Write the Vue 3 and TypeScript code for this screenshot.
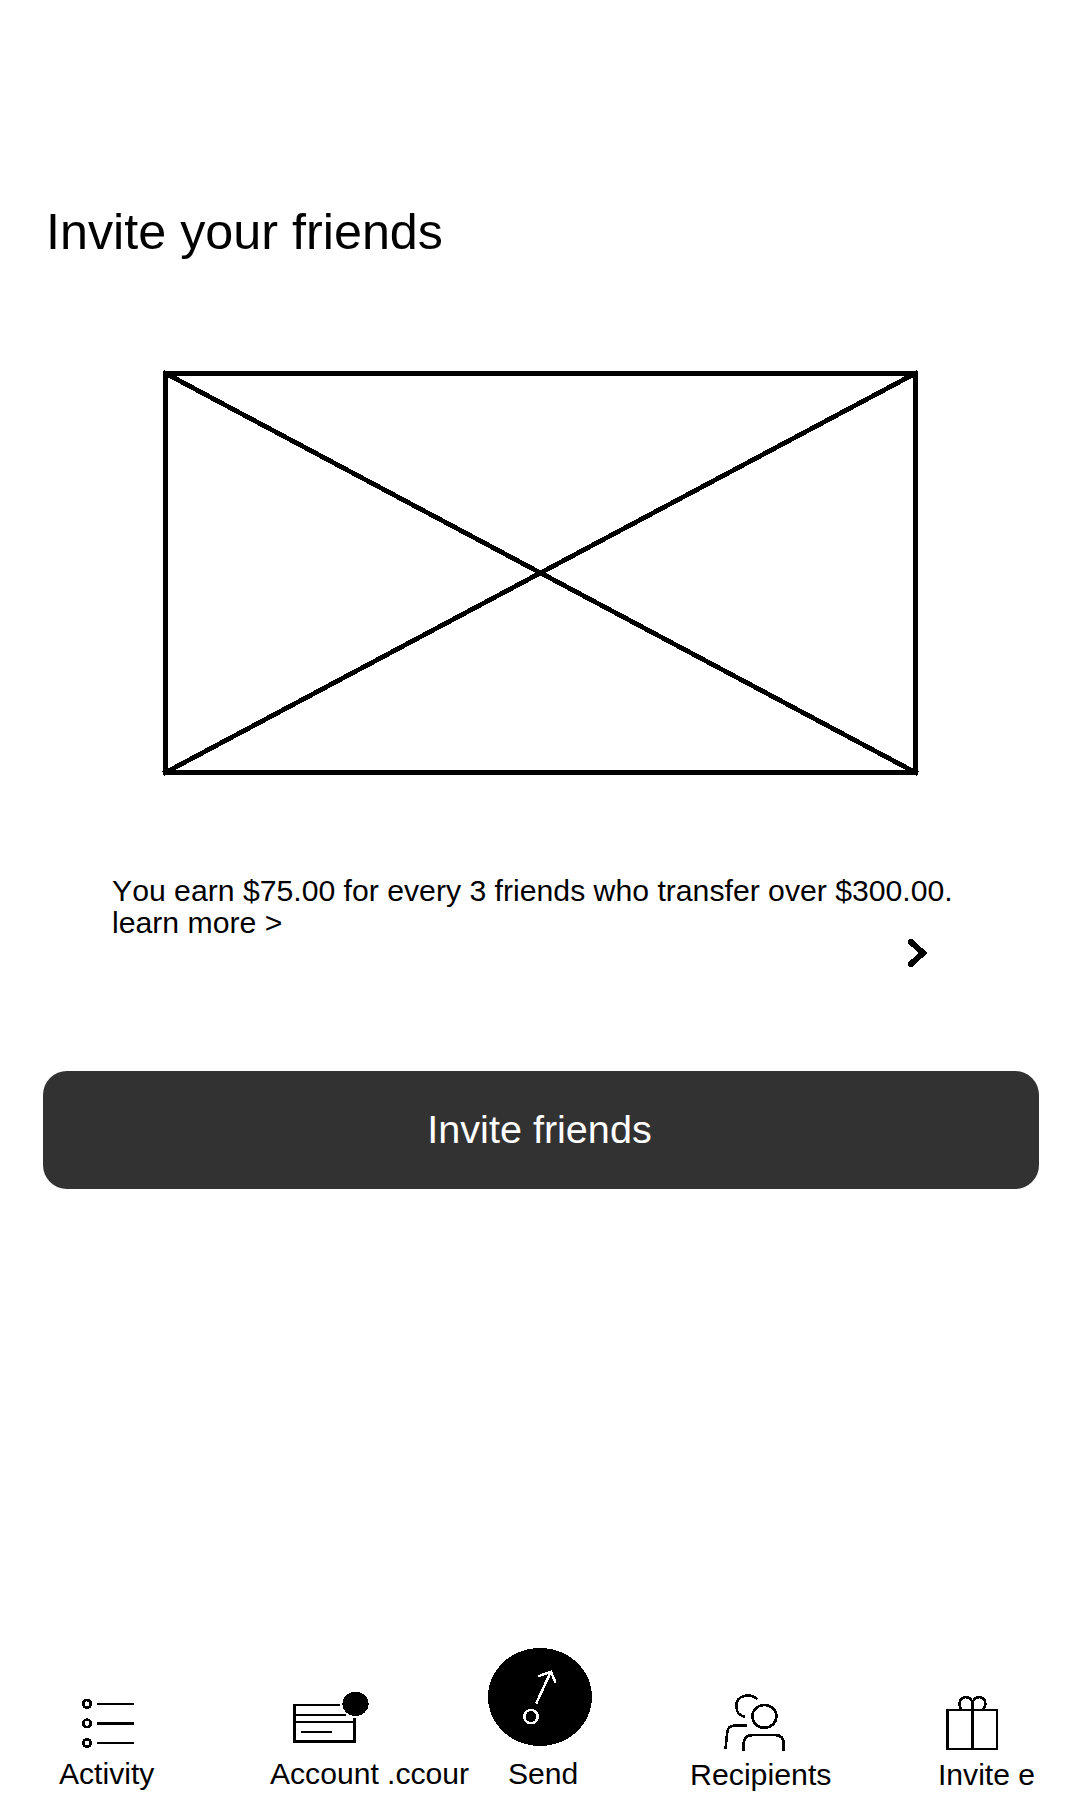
<script setup lang="ts">
const title = 'Invite your friends'
const reward = 'You earn $75.00 for every 3 friends who transfer over $300.00.'
</script>

<template>
  <main class="screen">
    <h1 class="title">{{ title }}</h1>

    <svg class="placeholder" viewBox="160 368 761 410" fill="none" stroke="#000" stroke-width="4.8">
      <rect x="165.5" y="373.3" width="750" height="399.2" />
      <path d="M165.5 373.3 915.5 772.5M915.5 373.3 165.5 772.5" stroke-linecap="square" />
    </svg>

    <section class="info">
      <p class="reward">{{ reward }}<br />learn more &gt;</p>
      <svg class="chevron" viewBox="906 937 23 32" fill="none" stroke="#000" stroke-width="6">
        <path d="M911 942 923 953 911 964" stroke-linecap="round" />
      </svg>
    </section>

    <button class="invite" type="button">Invite friends</button>

    <nav class="nav">
      <a class="item activity">
        <svg viewBox="59 1640 211 120" fill="none" stroke="#000">
          <g stroke-width="2.7">
            <circle cx="87" cy="1703.8" r="3.8" />
            <circle cx="87" cy="1723.4" r="3.8" />
            <circle cx="87" cy="1743" r="3.8" />
          </g>
          <path d="M97.3 1704H134M97.3 1743H134" stroke-width="2" />
          <path d="M97.3 1723.5H134" stroke-width="3" />
        </svg>
        <span>Activity</span>
      </a>
      <a class="item account">
        <svg viewBox="270 1640 238 120" fill="none" stroke="#000">
          <path d="M340 1705H293M295 1715H346M295 1722H355M301 1732H332" stroke-width="2" />
          <path d="M294.5 1704V1741.5H354.5V1718" stroke-width="3" />
          <ellipse cx="355.5" cy="1703.8" rx="13.1" ry="12.1" fill="#000" stroke="none" />
        </svg>
        <span>Account .ccour</span>
      </a>
      <a class="item send">
        <svg viewBox="508 1640 182 120" fill="none" stroke="#fff" stroke-width="2.5">
          <ellipse cx="540" cy="1697" rx="52" ry="49" fill="#000" stroke="none" />
          <circle cx="531" cy="1716.6" r="6.7" />
          <path d="M536.2 1703.5 550.7 1672M538.3 1676.3 551 1671.7 555.5 1682.7" />
        </svg>
        <span>Send</span>
      </a>
      <a class="item recipients">
        <svg viewBox="690 1640 248 120" fill="none" stroke="#000" stroke-width="2.6">
          <ellipse cx="764.4" cy="1716.4" rx="12" ry="11.4" />
          <path d="M743.5 1751V1745Q743.5 1735 753 1735H775Q783.7 1735 783.7 1744V1751" />
          <path d="M757.6 1699.3C750 1692.5 736.3 1695 736.3 1706C736.3 1712 740 1716 745 1716.8" />
          <path d="M725.5 1748.7 727.3 1732Q728 1725.5 735 1725.5H747" />
        </svg>
        <span>Recipients</span>
      </a>
      <a class="item gift">
        <svg viewBox="938 1640 142 120" fill="none" stroke="#000">
          <path d="M946 1710H998M997 1709V1750M946 1749H998" stroke-width="2" />
          <path d="M947.4 1709V1750M972.5 1702V1750" stroke-width="3" />
          <path d="M961.3 1709.5C957.5 1704 960 1697.2 965.7 1697.2C970 1697.2 972.5 1700 972.5 1704C972.5 1700 975 1697.2 979 1697.2C985.8 1697.2 987.5 1705.5 982.3 1709.5" stroke-width="2.5" />
        </svg>
        <span>Invite e</span>
      </a>
    </nav>
  </main>
</template>

<style>
body {
  margin: 0;
  background: #fff;
}
</style>

<style scoped>
.screen {
  display: flex;
  flex-direction: column;
  box-sizing: border-box;
  width: 1080px;
  height: 1800px;
  padding-top: 202px;
  overflow: hidden;
  background: #fff;
  color: #000;
  font-family: "Liberation Sans", Arial, sans-serif;
  font-kerning: none;
}

.screen svg {
  shape-rendering: crispEdges;
}

.title {
  margin: 0 0 0 46px;
  font-size: 50.3px;
  font-weight: 400;
  line-height: 60px;
}

.placeholder {
  display: block;
  flex: none;
  width: 761px;
  height: 410px;
  margin: 106px 0 0 160px;
}

.info {
  display: flex;
  flex-direction: column;
  height: 193px;
  margin-top: 97px;
  padding-left: 112px;
}

.reward {
  margin: 0;
  font-size: 30.2px;
  line-height: 32px;
  white-space: nowrap;
}

.chevron {
  width: 23px;
  height: 32px;
  margin: -2px 0 0 794px;
}

.invite {
  box-sizing: border-box;
  flex: none;
  width: 996px;
  height: 118px;
  margin: 3px 0 0 43px;
  padding: 0 3px 2px 0;
  border: 0;
  border-radius: 24px;
  background: #323232;
  color: #fff;
  font: 39.6px/46px "Liberation Sans", Arial, sans-serif;
}

.nav {
  display: flex;
  height: 160px;
  margin-top: auto;
}

.item {
  display: flex;
  flex-direction: column;
  flex: none;
  font-size: 30.1px;
  line-height: 34px;
  white-space: nowrap;
}

.item svg {
  display: block;
  width: 100%;
  height: 120px;
  margin-bottom: -3px;
  overflow: visible;
}

.activity {
  width: 211px;
  margin-left: 59px;
}

.account {
  width: 238px;
}

.send {
  width: 182px;
}

.recipients {
  width: 248px;
  font-size: 30.3px;
}

.gift {
  width: 142px;
}

.recipients span,
.gift span {
  padding-top: 1px;
}
</style>
